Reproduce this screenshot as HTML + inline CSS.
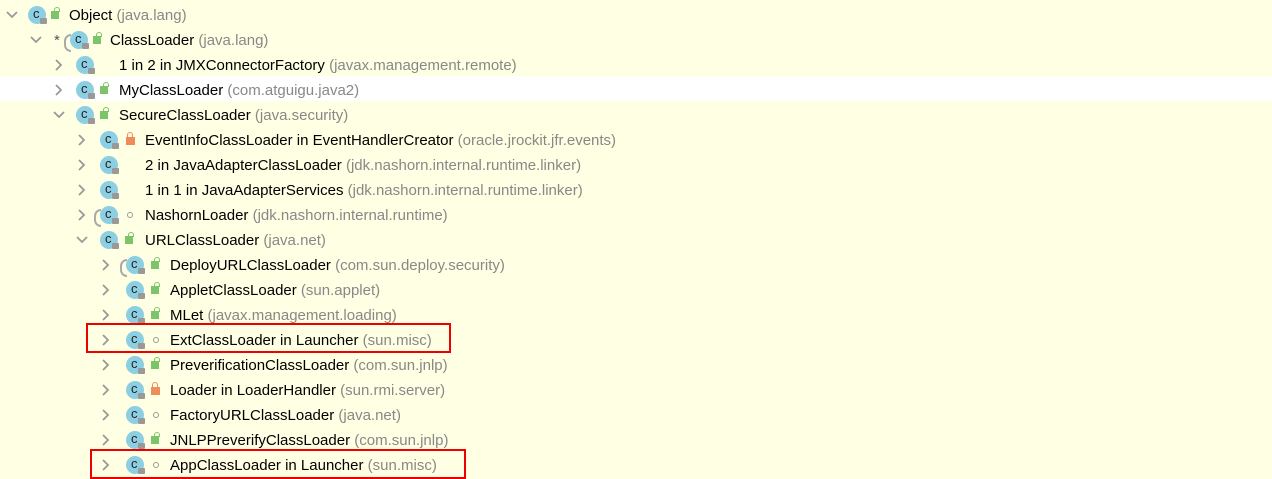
<!DOCTYPE html>
<html><head><meta charset="utf-8"><style>
body{margin:0;width:1272px;height:479px;background:#ffffe4;overflow:hidden;position:relative;font-family:"Liberation Sans",sans-serif;font-size:15px;color:#000}
.r{position:absolute;left:0;width:1272px;height:25px}
.w{background:#fff}
.a{position:absolute;top:8px}
.ic{position:absolute;top:5px;width:18px;height:18px;border-radius:50%;background:#8ccfe2}
.ic:before{content:"c";position:absolute;left:5px;top:0px;font:13px "Liberation Sans",sans-serif;color:#222}
.ic:after{content:"";position:absolute;left:12px;top:12px;width:7px;height:6px;background:#999;border-radius:1px}
.ar{position:absolute;top:3px;left:-6px;width:5px;height:14px;border:2px solid #aaa;border-right:none;border-radius:8px 0 0 8px}
.gl{position:absolute;top:10px;width:8px;height:8px;background:#7cc46a}
.gl:before{content:"";position:absolute;left:3px;top:-4px;width:4px;height:4px;border:1.5px solid #7cc46a;border-bottom:none;border-radius:3px 3px 0 0}
.rl{position:absolute;top:11px;width:9px;height:8px;background:#f08c5c}
.rl:before{content:"";position:absolute;left:1px;top:-5px;width:4px;height:4px;border:1.5px solid #f08c5c;border-bottom:none;border-radius:3px 3px 0 0}
.ci{position:absolute;top:11px;width:4px;height:4px;border:1.5px solid #999;border-radius:50%}
.t{position:absolute;top:6px;white-space:nowrap}
.p{color:#888}
.box{position:absolute;border:2px solid #e00}
</style></head><body>
<svg width="0" height="0" style="position:absolute"><defs>
<symbol id="dn" viewBox="0 0 12 12"><polyline points="1,3 6,8 11,3" fill="none" stroke="#999" stroke-width="1.8"/></symbol>
<symbol id="rt" viewBox="0 0 12 12"><polyline points="3,1 8,6 3,11" fill="none" stroke="#999" stroke-width="1.8"/></symbol>
</defs></svg>

<div class="r" style="top:1px"><svg class="a" style="left:6px" width="12" height="12"><use href="#dn"/></svg><div class="ic" style="left:28px"></div><div class="gl" style="left:51px"></div><span class="t" style="left:69px">Object <span class="p">(java.lang)</span></span></div>

<div class="r" style="top:26px"><svg class="a" style="left:30px" width="12" height="12"><use href="#dn"/></svg><span class="t" style="left:54px;color:#555">*</span><div class="ic" style="left:70px"><div class="ar"></div></div><div class="gl" style="left:93px"></div><span class="t" style="left:110px">ClassLoader <span class="p">(java.lang)</span></span></div>

<div class="r" style="top:51px"><svg class="a" style="left:53px" width="12" height="12"><use href="#rt"/></svg><div class="ic" style="left:76px"></div><span class="t" style="left:119px">1 in 2 in JMXConnectorFactory <span class="p">(javax.management.remote)</span></span></div>

<div class="r w" style="top:76px"><svg class="a" style="left:53px" width="12" height="12"><use href="#rt"/></svg><div class="ic" style="left:76px"></div><div class="gl" style="left:100px"></div><span class="t" style="left:119px">MyClassLoader <span class="p">(com.atguigu.java2)</span></span></div>

<div class="r" style="top:101px"><svg class="a" style="left:53px" width="12" height="12"><use href="#dn"/></svg><div class="ic" style="left:76px"></div><div class="gl" style="left:100px"></div><span class="t" style="left:119px">SecureClassLoader <span class="p">(java.security)</span></span></div>

<div class="r" style="top:126px"><svg class="a" style="left:76px" width="12" height="12"><use href="#rt"/></svg><div class="ic" style="left:100px"></div><div class="rl" style="left:126px"></div><span class="t" style="left:145px">EventInfoClassLoader in EventHandlerCreator <span class="p">(oracle.jrockit.jfr.events)</span></span></div>

<div class="r" style="top:151px"><svg class="a" style="left:76px" width="12" height="12"><use href="#rt"/></svg><div class="ic" style="left:100px"></div><span class="t" style="left:145px">2 in JavaAdapterClassLoader <span class="p">(jdk.nashorn.internal.runtime.linker)</span></span></div>

<div class="r" style="top:176px"><svg class="a" style="left:76px" width="12" height="12"><use href="#rt"/></svg><div class="ic" style="left:100px"></div><span class="t" style="left:145px">1 in 1 in JavaAdapterServices <span class="p">(jdk.nashorn.internal.runtime.linker)</span></span></div>

<div class="r" style="top:201px"><svg class="a" style="left:76px" width="12" height="12"><use href="#rt"/></svg><div class="ic" style="left:100px"><div class="ar"></div></div><div class="ci" style="left:127px"></div><span class="t" style="left:145px">NashornLoader <span class="p">(jdk.nashorn.internal.runtime)</span></span></div>

<div class="r" style="top:226px"><svg class="a" style="left:76px" width="12" height="12"><use href="#dn"/></svg><div class="ic" style="left:100px"></div><div class="gl" style="left:125px"></div><span class="t" style="left:145px">URLClassLoader <span class="p">(java.net)</span></span></div>

<div class="r" style="top:251px"><svg class="a" style="left:100px" width="12" height="12"><use href="#rt"/></svg><div class="ic" style="left:126px"><div class="ar"></div></div><div class="gl" style="left:151px"></div><span class="t" style="left:170px">DeployURLClassLoader <span class="p">(com.sun.deploy.security)</span></span></div>

<div class="r" style="top:276px"><svg class="a" style="left:100px" width="12" height="12"><use href="#rt"/></svg><div class="ic" style="left:126px"></div><div class="gl" style="left:151px"></div><span class="t" style="left:170px">AppletClassLoader <span class="p">(sun.applet)</span></span></div>

<div class="r" style="top:301px"><svg class="a" style="left:100px" width="12" height="12"><use href="#rt"/></svg><div class="ic" style="left:126px"></div><div class="gl" style="left:151px"></div><span class="t" style="left:170px">MLet <span class="p">(javax.management.loading)</span></span></div>

<div class="r" style="top:326px"><svg class="a" style="left:100px" width="12" height="12"><use href="#rt"/></svg><div class="ic" style="left:126px"></div><div class="ci" style="left:153px"></div><span class="t" style="left:170px">ExtClassLoader in Launcher <span class="p">(sun.misc)</span></span></div>

<div class="r" style="top:351px"><svg class="a" style="left:100px" width="12" height="12"><use href="#rt"/></svg><div class="ic" style="left:126px"></div><div class="gl" style="left:151px"></div><span class="t" style="left:170px">PreverificationClassLoader <span class="p">(com.sun.jnlp)</span></span></div>

<div class="r" style="top:376px"><svg class="a" style="left:100px" width="12" height="12"><use href="#rt"/></svg><div class="ic" style="left:126px"></div><div class="rl" style="left:151px"></div><span class="t" style="left:170px">Loader in LoaderHandler <span class="p">(sun.rmi.server)</span></span></div>

<div class="r" style="top:401px"><svg class="a" style="left:100px" width="12" height="12"><use href="#rt"/></svg><div class="ic" style="left:126px"></div><div class="ci" style="left:153px"></div><span class="t" style="left:170px">FactoryURLClassLoader <span class="p">(java.net)</span></span></div>

<div class="r" style="top:426px"><svg class="a" style="left:100px" width="12" height="12"><use href="#rt"/></svg><div class="ic" style="left:126px"></div><div class="gl" style="left:151px"></div><span class="t" style="left:170px">JNLPPreverifyClassLoader <span class="p">(com.sun.jnlp)</span></span></div>

<div class="r" style="top:451px"><svg class="a" style="left:100px" width="12" height="12"><use href="#rt"/></svg><div class="ic" style="left:126px"></div><div class="ci" style="left:153px"></div><span class="t" style="left:170px">AppClassLoader in Launcher <span class="p">(sun.misc)</span></span></div>

<div class="box" style="left:86px;top:323px;width:361px;height:26px"></div>
<div class="box" style="left:90px;top:449px;width:372px;height:26px"></div>
</body></html>
